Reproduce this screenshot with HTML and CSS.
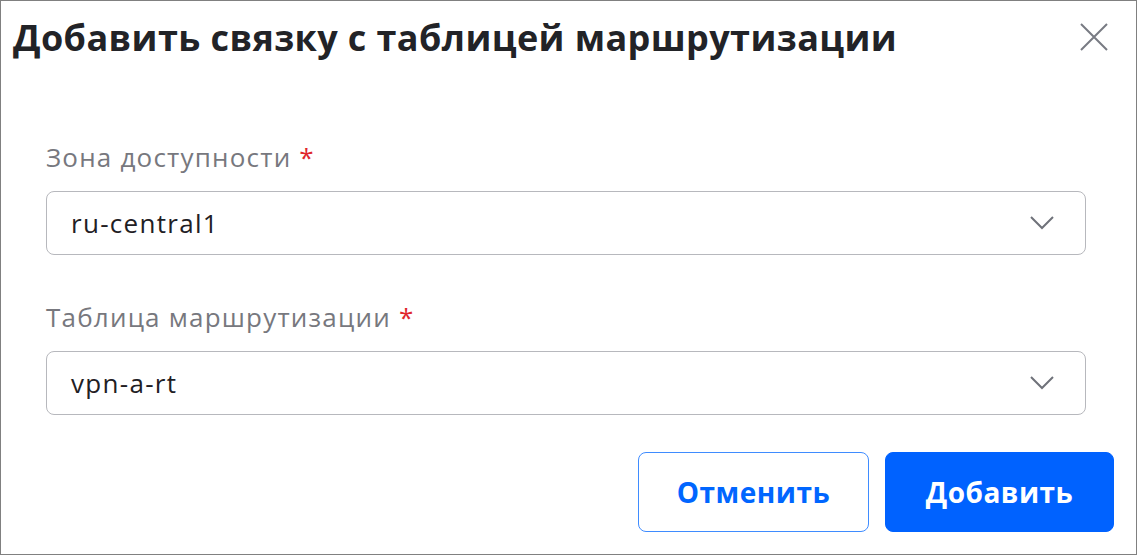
FILE: index.html
```html
<!DOCTYPE html>
<html lang="ru">
<head>
<meta charset="utf-8">
<link rel="stylesheet" href="styles.css">
</head>
<body>
<div class="dialog">
  <div class="header">
    <h1 class="title">Добавить связку с таблицей маршрутизации</h1>
    <button class="close" aria-label="Закрыть">
      <svg width="28" height="28" viewBox="0 0 28 28"><path d="M1 1 L27 27 M27 1 L1 27" stroke="#787b83" stroke-width="2" fill="none"/></svg>
    </button>
  </div>
  <div class="form">
    <div class="field">
      <div class="label">Зона доступности <span class="req">*</span></div>
      <div class="select">
        <span class="value">ru-central1</span>
        <svg class="chev" width="24" height="14" viewBox="0 0 24 14"><path d="M1 1 L12 12 L23 1" stroke="#6f727a" stroke-width="2" fill="none"/></svg>
      </div>
    </div>
    <div class="field">
      <div class="label">Таблица маршрутизации <span class="req">*</span></div>
      <div class="select">
        <span class="value">vpn-a-rt</span>
        <svg class="chev" width="24" height="14" viewBox="0 0 24 14"><path d="M1 1 L12 12 L23 1" stroke="#6f727a" stroke-width="2" fill="none"/></svg>
      </div>
    </div>
  </div>
  <div class="footer">
    <button class="btn btn-outline">Отменить</button>
    <button class="btn btn-primary">Добавить</button>
  </div>
</div>
</body>
</html>
```
FILE: styles.css
```css
html, body {
  margin: 0;
  padding: 0;
  background: #fff;
}
body {
  font-family: "Open Sans", "Noto Sans", sans-serif;
}
.dialog {
  box-sizing: border-box;
  width: 1137px;
  height: 555px;
  border: 1px solid #808080;
  display: flex;
  flex-direction: column;
}
.header {
  display: flex;
  align-items: flex-start;
  justify-content: space-between;
  padding: 12px 28px 0 12px;
}
.title {
  margin: 0;
  font-size: 36px;
  letter-spacing: 0.4px;
  line-height: 50px;
  font-weight: 700;
  color: #222327;
}
.close {
  border: 0;
  background: none;
  padding: 0;
  margin-top: 10px;
  width: 28px;
  height: 28px;
  cursor: pointer;
}
.close svg { display: block; }
.form {
  padding: 77px 50px 0 45px;
  display: flex;
  flex-direction: column;
  gap: 45px;
}
.label {
  font-size: 26px;
  letter-spacing: 1.2px;
  line-height: 34px;
  color: #77787e;
  margin-bottom: 17px;
}
.req { color: #e0262c; }
.select {
  box-sizing: border-box;
  height: 64px;
  border: 1px solid #b7b8bd;
  border-radius: 8px;
  display: flex;
  align-items: center;
  justify-content: space-between;
  padding: 0 31px 0 24px;
}
.value {
  font-size: 26px;
  letter-spacing: 1.3px;
  color: #1f2024;
}
.chev { display: block; }
.footer {
  display: flex;
  justify-content: flex-end;
  gap: 16px;
  padding: 37px 22px 0 0;
}
.btn {
  box-sizing: border-box;
  height: 80px;
  border-radius: 8px;
  font-family: inherit;
  font-size: 28px;
  letter-spacing: 0.5px;
  font-weight: 700;
  cursor: pointer;
}
.btn-outline {
  width: 231px;
  background: #fff;
  border: 1px solid #3f8cff;
  color: #0066ff;
}
.btn-primary {
  width: 229px;
  background: #0062ff;
  border: 1px solid #0062ff;
  color: #fff;
}
```
